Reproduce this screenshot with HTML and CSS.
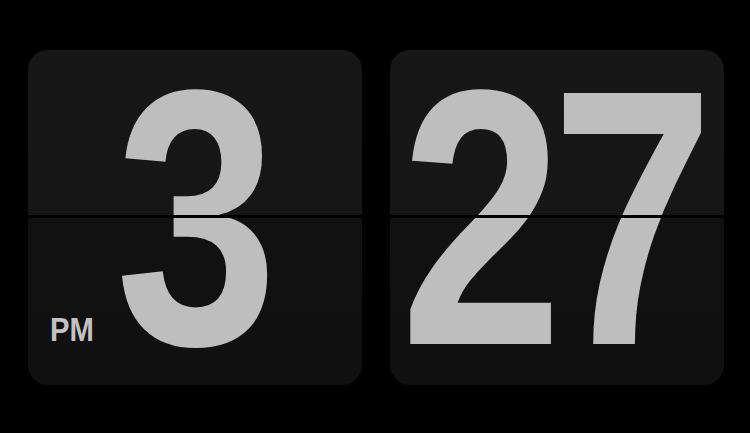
FILE: index.html
```html
<!DOCTYPE html>
<html>
<head>
<meta charset="utf-8">
<link rel="stylesheet" href="styles.css">
</head>
<body>
<div class="clock">
  <div class="card">
    <div class="digits"><span class="num">3</span></div>
    <div class="ampm">PM</div>
  </div>
  <div class="card">
    <div class="digits"><span class="num">27</span></div>
  </div>
</div>
</body>
</html>
```
FILE: styles.css
```css
html, body {
  margin: 0;
  padding: 0;
  background: #000;
}
.clock {
  display: flex;
  gap: 28px;
  padding: 50px 0 0 28px;
}
.card {
  position: relative;
  width: 334px;
  height: 335px;
  border-radius: 20px;
  background: linear-gradient(#171717 0, #161616 165px, #111111 168px, #101010 100%);
}
.card::after {
  content: "";
  position: absolute;
  left: 0;
  right: 0;
  top: 165px;
  height: 3px;
  background: #000;
}
.digits {
  height: 335px;
  display: flex;
  align-items: center;
  justify-content: center;
  padding-top: 1px;
  padding-left: 3px;
  box-sizing: border-box;
}
.card + .card .digits {
  padding-left: 0;
}
.num {
  font-family: "Liberation Sans", Arial, sans-serif;
  font-weight: bold;
  font-size: 365px;
  line-height: 0.9;
  color: #bebebe;
  letter-spacing: -14px;
  padding-right: 14px;
  transform: scaleX(0.8);
  white-space: nowrap;
}
.ampm {
  position: absolute;
  left: 22px;
  top: 262px;
  font-family: "Liberation Sans", Arial, sans-serif;
  font-weight: bold;
  font-size: 34px;
  line-height: 1;
  color: #c2c2c2;
  transform: scaleX(0.86);
  transform-origin: left center;
}
```
